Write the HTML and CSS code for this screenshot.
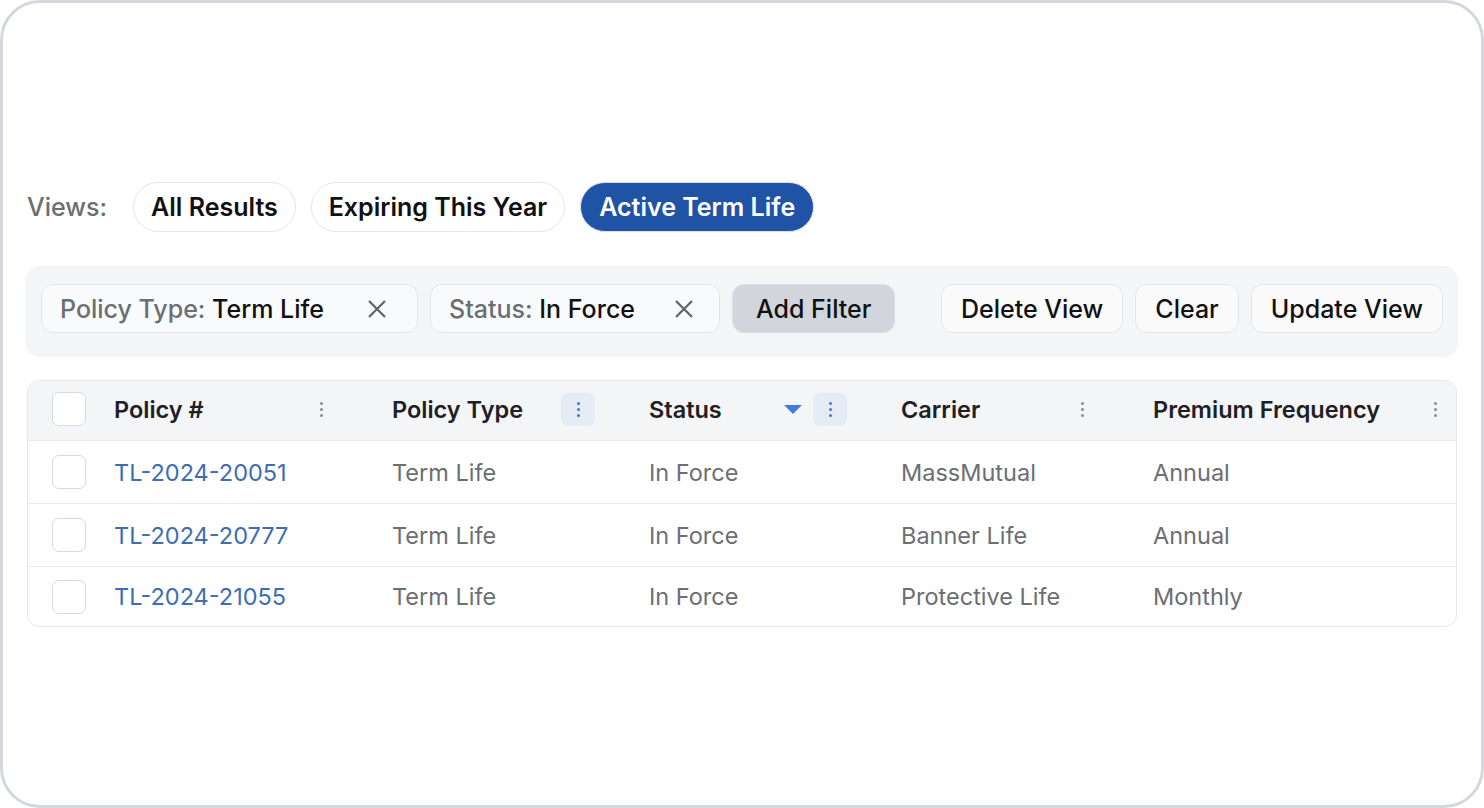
FILE: index.html
```html
<!DOCTYPE html>
<html lang="en">
<head>
<meta charset="UTF-8">
<meta name="viewport" content="width=device-width, initial-scale=1.0">
<title>Policies</title>
<link rel="stylesheet" href="styles.css">
</head>
<body>

<div class="frame">
  <div class="views">
    <span class="views-label">Views:</span>
    <button class="pill">All Results</button>
    <button class="pill">Expiring This Year</button>
    <button class="pill active">Active Term Life</button>
  </div>

  <div class="filter-bar">
    <div class="filter-group">
      <div class="chip">
        <span><span class="chip-key">Policy Type:</span> Term Life</span>
        <svg class="chip-x" viewBox="0 0 20 20"><path d="M2 2 L18 18 M18 2 L2 18"/></svg>
      </div>
      <div class="chip chip-short">
        <span><span class="chip-key">Status:</span> In Force</span>
        <svg class="chip-x" viewBox="0 0 20 20"><path d="M2 2 L18 18 M18 2 L2 18"/></svg>
      </div>
      <button class="btn btn-grey">Add Filter</button>
    </div>
    <div class="filter-group">
      <button class="btn">Delete View</button>
      <button class="btn">Clear</button>
      <button class="btn">Update View</button>
    </div>
  </div>

  <div class="table">
    <div class="row head">
      <div class="cell"><span class="check"></span></div>
      <div class="cell">Policy # <span class="menu"><i></i><i></i><i></i></span></div>
      <div class="cell">Policy Type <span class="menu on"><i></i><i></i><i></i></span></div>
      <div class="cell">Status <span class="sort"></span><span class="menu on"><i></i><i></i><i></i></span></div>
      <div class="cell">Carrier <span class="menu"><i></i><i></i><i></i></span></div>
      <div class="cell">Premium Frequency <span class="menu"><i></i><i></i><i></i></span></div>
    </div>
    <div class="row">
      <div class="cell"><span class="check"></span></div>
      <div class="cell"><a href="#">TL-2024-20051</a></div>
      <div class="cell">Term Life</div>
      <div class="cell">In Force</div>
      <div class="cell">MassMutual</div>
      <div class="cell">Annual</div>
    </div>
    <div class="row">
      <div class="cell"><span class="check"></span></div>
      <div class="cell"><a href="#">TL-2024-20777</a></div>
      <div class="cell">Term Life</div>
      <div class="cell">In Force</div>
      <div class="cell">Banner Life</div>
      <div class="cell">Annual</div>
    </div>
    <div class="row">
      <div class="cell"><span class="check"></span></div>
      <div class="cell"><a href="#">TL-2024-21055</a></div>
      <div class="cell">Term Life</div>
      <div class="cell">In Force</div>
      <div class="cell">Protective Life</div>
      <div class="cell">Monthly</div>
    </div>
  </div>
</div>

</body>
</html>
```

FILE: styles.css
```css
* {
  box-sizing: border-box;
}
body {
  font-family: Inter, "Noto Sans", sans-serif;
  margin: 0;
  padding: 0;
  background: #fff;
  color: #111;
}
button {
  font-family: inherit;
}
.frame {
  height: 808px;
  border: 3px solid #d4d8de;
  border-radius: 40px;
  padding: 179px 23px 0 23px;
}

/* saved views */
.views {
  display: flex;
  align-items: center;
  gap: 15px;
}
.views-label {
  font-size: 25px;
  font-weight: 500;
  color: #6b6e73;
  margin: 0 11px 0 1px;
}
.pill {
  height: 50px;
  padding: 0 17px;
  border: 1.5px solid #e3e5e9;
  border-radius: 25px;
  background: #fff;
  font-size: 25px;
  font-weight: 600;
  color: #111;
}
.pill.active {
  background: #1f53a5;
  border-color: #d9dee8;
  color: #fff;
  padding: 0 18px;
}

/* filters */
.filter-bar {
  margin-top: 34px;
  height: 91px;
  background: #f4f5f7;
  border-radius: 14px;
  padding: 18px 15px 0 15px;
  display: flex;
  align-items: flex-start;
  justify-content: space-between;
}
.filter-group {
  display: flex;
  gap: 12px;
}
.chip {
  width: 377px;
  height: 49px;
  display: flex;
  align-items: center;
  justify-content: space-between;
  padding: 0 30px 0 18px;
  border: 1.5px solid #e4e6ea;
  border-radius: 12px;
  background: #f9fafb;
  font-size: 25px;
  font-weight: 500;
  color: #111;
}
.chip-short {
  width: 290px;
  padding-right: 25px;
}
.chip-key {
  color: #6b6e73;
}
.chip-x {
  width: 20px;
  height: 20px;
  flex-shrink: 0;
  stroke: #5f6368;
  stroke-width: 2.2;
  fill: none;
}
.btn {
  height: 49px;
  padding: 0 19px;
  border: 1.5px solid #e4e6ea;
  border-radius: 12px;
  background: #fafafa;
  font-size: 25px;
  font-weight: 500;
  color: #111;
}
.btn-grey {
  background: #d2d5db;
  border-color: #dcdfe4;
  padding: 0 23px;
}

/* table */
.table {
  margin: 23px 1px 0 1px;
  border: 1px solid #e5e7eb;
  border-radius: 12px;
  overflow: hidden;
}
.row {
  display: grid;
  grid-template-columns: 86px 278px 257px 252px 252px 1fr;
  height: 63px;
  align-items: center;
  border-top: 1px solid #e8eaed;
  font-size: 23.5px;
  color: #6b6e73;
}
.row.head {
  height: 59px;
  border-top: 0;
  background: #f4f5f7;
  font-weight: 600;
  color: #1f2023;
  padding-bottom: 3px;
}
.row:last-child {
  height: 60px;
}
.cell {
  display: flex;
  align-items: center;
  padding-right: 54px;
  white-space: nowrap;
}
.cell:last-child {
  padding-right: 4px;
}
.head .cell:not(:first-child) {
  justify-content: space-between;
}
.cell a {
  color: #3d6eb5;
  text-decoration: none;
}
.check {
  flex-shrink: 0;
  width: 34px;
  height: 34px;
  margin-left: 24px;
  border: 1.5px solid #d5d8dd;
  border-radius: 7px;
  background: #fff;
}
.menu {
  flex-shrink: 0;
  width: 34px;
  height: 33px;
  border-radius: 7px;
  display: flex;
  flex-direction: column;
  align-items: center;
  justify-content: center;
  gap: 3px;
}
.menu i {
  width: 3px;
  height: 3px;
  border-radius: 50%;
  background: #8a8d92;
}
.menu.on {
  background: #e6ecf6;
}
.menu.on i {
  background: #3f7be0;
}
.sort {
  flex-shrink: 0;
  width: 0;
  height: 0;
  margin-left: auto;
  margin-right: 11px;
  border-left: 9px solid transparent;
  border-right: 9px solid transparent;
  border-top: 9px solid #3f7be0;
}
```
